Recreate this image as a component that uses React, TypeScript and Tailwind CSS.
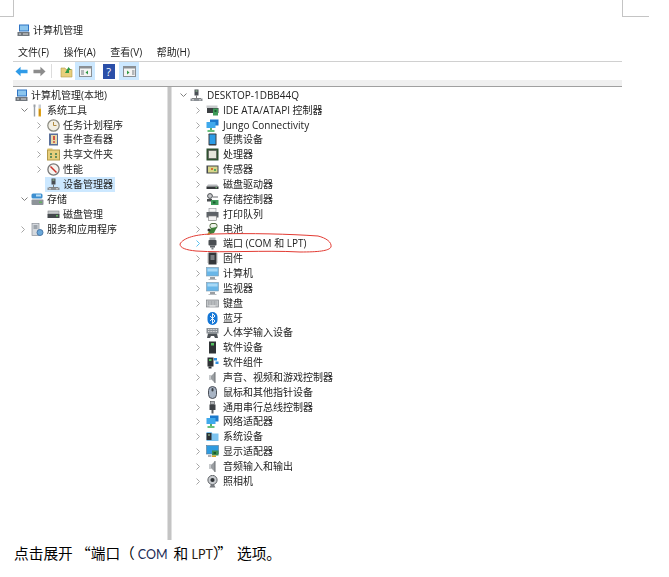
import type { ReactNode } from "react";

const Svg = ({ children }: { children: ReactNode }) => (
  <svg viewBox="0 0 13 13" className="w-[13px] h-[13px] shrink-0">
    {children}
  </svg>
);

const Host = () => (
  <Svg>
    <rect x="4.5" y="0.5" width="4" height="6" fill="#4a4f55" />
    <rect x="5.5" y="1.5" width="2" height="1" fill="#9fd4a0" />
    <path d="M6.5 6.5v3M2 9.5h9" stroke="#777" fill="none" />
    <rect x="0.5" y="9.5" width="12" height="2.5" fill="#8a8f94" />
    <rect x="2" y="10.3" width="2" height="1" fill="#ddd" />
    <rect x="9" y="10.3" width="2" height="1" fill="#ddd" />
  </Svg>
);

const Manage = () => (
  <Svg>
    <rect x="2" y="0.5" width="10" height="7" fill="#2f74c4" />
    <rect x="3" y="1.5" width="8" height="5" fill="#8cc6ee" />
    <rect x="0.5" y="8" width="12" height="4" fill="#70767c" />
    <path d="M2 10h2M6 10h5" stroke="#ddd" />
  </Svg>
);

const Tools = () => (
  <Svg>
    <path d="M2.5 0.5h2v2l-0.3 1v9h-1.4v-9l-0.3-1z" fill="#9aa0a6" />
    <path d="M7.5 0.5h2.5v4h-2.5z" fill="#c8ccd0" />
    <path d="M7.5 4.5h2.5v8h-2.5z" fill="#e6a81e" />
    <path d="M8.7 5.5v6" stroke="#a8720c" strokeWidth="0.6" />
  </Svg>
);

const Clock = () => (
  <Svg>
    <circle cx="6.5" cy="6.5" r="5.7" fill="#f2efe4" stroke="#8a8a80" strokeWidth="1.2" />
    <path d="M6.5 3v3.5h3" stroke="#b08a40" fill="none" />
  </Svg>
);

const EventLog = () => (
  <Svg>
    <rect x="2" y="0.5" width="9" height="12" fill="#5a6f9a" />
    <rect x="4" y="2" width="6" height="9" fill="#e8d9a8" />
    <path d="M7 3v4" stroke="#c8322a" strokeWidth="1.6" />
    <rect x="6.2" y="8.2" width="1.6" height="1.6" fill="#c8322a" />
  </Svg>
);

const Shared = () => (
  <Svg>
    <rect x="0.5" y="2" width="12" height="10" fill="#e8cf7c" stroke="#b39a4a" />
    <path d="M0.5 2h5v-1.5h-5z" fill="#d8bc62" />
    <path d="M3 6h2M3 9h2M8 6h2M8 9h2" stroke="#3d7a4c" strokeWidth="1.4" />
  </Svg>
);

const Perf = () => (
  <Svg>
    <circle cx="6.5" cy="6.5" r="5.6" fill="#f6f3ef" stroke="#777" strokeWidth="1.3" />
    <path d="M3.5 3.5l6 6" stroke="#c8322a" strokeWidth="1.5" />
  </Svg>
);

const Storage = () => (
  <Svg>
    <rect x="0.5" y="0.5" width="11" height="5" rx="1.5" fill="#3d8fd0" />
    <rect x="5" y="1.5" width="5" height="2" fill="#b9def5" />
    <rect x="0.5" y="6.5" width="12" height="5.5" rx="1" fill="#8d9399" />
    <rect x="8" y="8.5" width="3" height="1.5" fill="#62b45f" />
  </Svg>
);

const Disk = () => (
  <Svg>
    <rect x="1" y="3" width="11" height="3" fill="#c8cacc" stroke="#808488" strokeWidth="0.6" />
    <rect x="0.5" y="6" width="12" height="4" fill="#45494d" />
    <rect x="9" y="7" width="2" height="1.5" fill="#62b45f" />
  </Svg>
);

const Services = () => (
  <Svg>
    <rect x="1" y="0.5" width="7" height="12" fill="#d5d9de" stroke="#8a9099" strokeWidth="0.7" />
    <path d="M2.5 3h4M2.5 5h4" stroke="#67707a" />
    <circle cx="9" cy="9.5" r="3" fill="#6aa8da" stroke="#4a78a8" />
  </Svg>
);

const Ide = () => (
  <Svg>
    <rect x="0.5" y="1.5" width="11" height="2.5" fill="#c8cacc" />
    <rect x="1" y="4" width="11.5" height="5" fill="#3c4043" />
    <rect x="7" y="4.5" width="5" height="7" fill="#3d9a58" />
    <rect x="8.5" y="6" width="2" height="2" fill="#1c5a30" />
  </Svg>
);

const Network = () => (
  <Svg>
    <rect x="4" y="0.5" width="8.5" height="6" fill="#1c79cc" />
    <rect x="0.5" y="3" width="9" height="6" fill="#3fa9ec" />
    <path d="M5 9v2" stroke="#2f9a45" strokeWidth="1.6" />
    <path d="M1.5 12h7" stroke="#42b05a" strokeWidth="1.6" />
  </Svg>
);

const Portable = () => (
  <Svg>
    <rect x="2.5" y="0.5" width="8" height="12" rx="0.8" fill="#3a3f44" />
    <rect x="3.5" y="1.5" width="6" height="9.5" fill="#2d9ce6" />
  </Svg>
);

const Cpu = () => (
  <Svg>
    <rect x="0.5" y="0.5" width="12" height="12" fill="#2f5030" />
    <rect x="2.5" y="2.5" width="8" height="8" fill="#e6e6dc" stroke="#555" strokeWidth="0.6" />
  </Svg>
);

const Sensor = () => (
  <Svg>
    <rect x="0.5" y="2.5" width="12" height="8" fill="#45494d" />
    <rect x="2" y="3.5" width="9.5" height="6" fill="#d8d68a" />
    <rect x="5" y="5" width="2" height="2" fill="#d6702f" />
    <rect x="8" y="6" width="2" height="2" fill="#5ca85c" />
  </Svg>
);

const Drive = () => (
  <Svg>
    <path d="M2 6.5h9l1.5 2h-12z" fill="#b5b8bb" />
    <rect x="0.5" y="8.5" width="12" height="2.5" fill="#35383b" />
    <rect x="9.5" y="9.2" width="1.5" height="1" fill="#7cc77c" />
  </Svg>
);

const StorageCtl = () => (
  <Svg>
    <circle cx="4" cy="3" r="2.4" fill="#c8cacc" stroke="#4a4d50" />
    <rect x="1" y="6" width="5" height="2.5" fill="#4a4d50" />
    <rect x="5" y="7" width="7.5" height="5" fill="#3d9a58" />
    <rect x="7" y="8.5" width="2.5" height="2" fill="#1c5a30" />
    <path d="M7 4h5" stroke="#6a6d70" />
  </Svg>
);

const Printer = () => (
  <Svg>
    <rect x="3" y="0.5" width="7" height="3.5" fill="#f5f5f5" stroke="#8a8f94" strokeWidth="0.6" />
    <rect x="0.5" y="4" width="12" height="5.5" fill="#5d6267" />
    <rect x="2.5" y="8" width="8" height="4.5" fill="#f2f2f2" stroke="#777" strokeWidth="0.6" />
  </Svg>
);

const Battery = () => (
  <Svg>
    <rect x="4" y="0.5" width="7" height="5" rx="2" fill="#eef2ea" stroke="#4f6a3c" />
    <path d="M1 12l4-7 6-1-3 6z" fill="#3e7f38" />
    <path d="M1 12l3-1-1-2z" fill="#d8a420" />
    <circle cx="3" cy="7" r="1.5" fill="#333" />
  </Svg>
);

const Port = () => (
  <Svg>
    <rect x="3.5" y="0.5" width="6" height="2.5" fill="#a8acb0" />
    <rect x="2.5" y="3" width="8" height="5.5" rx="0.8" fill="#4a4e52" />
    <rect x="4" y="8.5" width="5" height="2" fill="#5f6367" />
    <rect x="5.5" y="10.5" width="2" height="2" fill="#7a7e82" />
  </Svg>
);

const Firmware = () => (
  <Svg>
    <rect x="2.5" y="0.5" width="8" height="12" fill="#34373a" />
    <path d="M2.5 2h-1M2.5 4h-1M2.5 6h-1M2.5 8h-1M2.5 10h-1M10.5 2h1M10.5 4h1M10.5 6h1M10.5 8h1M10.5 10h1" stroke="#777" />
    <rect x="4.5" y="3" width="4" height="5" fill="#7a7e82" />
  </Svg>
);

const Monitor = () => (
  <Svg>
    <rect x="0.5" y="0.5" width="12" height="8.5" fill="#68b6e8" stroke="#7f99ac" strokeWidth="0.6" />
    <rect x="1.5" y="1.5" width="10" height="3" fill="#a8d9f6" />
    <path d="M4 11h5" stroke="#9a9ea2" strokeWidth="2" />
    <path d="M2.5 12.5h8" stroke="#b8bcc0" />
  </Svg>
);

const Keyboard = () => (
  <Svg>
    <rect x="0.5" y="3" width="12" height="7" fill="#c4c7ca" stroke="#7e8286" strokeWidth="0.7" />
    <path d="M2 5h9M2 7h9" stroke="#8c9094" strokeDasharray="1 0.5" />
    <path d="M3.5 9h6" stroke="#f0f0f0" />
  </Svg>
);

const Bluetooth = () => (
  <Svg>
    <rect x="1.5" y="0" width="10" height="13" rx="5" fill="#1476d6" />
    <path d="M4 4l5 5-2.5 2.5v-10L9 4l-5 5" stroke="#fff" strokeWidth="0.9" fill="none" />
  </Svg>
);

const Hid = () => (
  <Svg>
    <rect x="0.5" y="2" width="12" height="5.5" fill="#8a9096" />
    <path d="M2 3.5h9M2 5.5h9" stroke="#ddd" strokeDasharray="1 0.6" />
    <path d="M1 12l1-4.5h9l1 4.5h-3l-1-2H5l-1 2z" fill="#4d5257" />
  </Svg>
);

const SoftDevice = () => (
  <Svg>
    <rect x="3" y="0.5" width="7" height="12" fill="#2f3235" />
    <rect x="5" y="2" width="3" height="2.5" fill="#54c060" />
  </Svg>
);

const SoftPart = () => (
  <Svg>
    <rect x="1.5" y="1.5" width="6" height="9" fill="#2f3235" />
    <rect x="3" y="3" width="2.5" height="2" fill="#54c060" />
    <path d="M2.5 10.5h3v2h-3z" fill="#2f3235" />
    <path d="M8 2h3v2.5H8zM9.5 5.5h3V8h-3z" fill="#2d8fe0" />
  </Svg>
);

const Speaker = () => (
  <Svg>
    <path d="M3 4.5h2.5L9 1v11L5.5 8.5H3z" fill="#9a9ea2" />
    <path d="M9 1v11" stroke="#6d7175" />
    <path d="M3 4.5h2v4H3z" fill="#c6c9cc" />
  </Svg>
);

const Mouse = () => (
  <Svg>
    <rect x="2.5" y="0.5" width="8" height="12" rx="4" fill="#a8b4c4" stroke="#4a4f58" />
    <rect x="5.5" y="2" width="2" height="3.5" rx="1" fill="#3d4248" />
  </Svg>
);

const Usb = () => (
  <Svg>
    <rect x="4.5" y="0.5" width="4" height="3" fill="#b0b3b6" stroke="#4a4e52" strokeWidth="0.6" />
    <rect x="3.5" y="3.5" width="6" height="5.5" fill="#3e4246" />
    <path d="M6.5 9v3.5" stroke="#5a5e62" strokeWidth="2" />
  </Svg>
);

const SysDevice = () => (
  <Svg>
    <path d="M0.5 2h5l1 1.5h6V11H0.5z" fill="#7cc3ef" />
    <rect x="0.5" y="3" width="5" height="7" fill="#2c3034" />
    <rect x="2" y="4.5" width="2" height="1" fill="#9fd4a0" />
  </Svg>
);

const Display = () => (
  <Svg>
    <rect x="0.5" y="0.5" width="12" height="8.5" fill="#2f9be0" stroke="#5a7a94" strokeWidth="0.6" />
    <rect x="6" y="5.5" width="6.5" height="5" fill="#3d8f50" />
    <rect x="7.5" y="7" width="2.5" height="2" fill="#1c5a30" />
    <rect x="6" y="10.5" width="4" height="1.5" fill="#d8a420" />
    <path d="M2 11h3.5" stroke="#9a9ea2" strokeWidth="1.6" />
  </Svg>
);

const Camera = () => (
  <Svg>
    <circle cx="6.5" cy="5" r="4.6" fill="#c9ccd0" stroke="#5e6266" />
    <circle cx="6.5" cy="5" r="2.1" fill="#2f3337" />
    <path d="M3.5 12.5h6L8 9.5H5z" fill="#777b80" />
  </Svg>
);

type RowProps = {
  icon: ReactNode;
  label: string;
  open?: boolean;
  shut?: boolean;
  pad?: string;
  active?: boolean;
  hot?: boolean;
  wide?: boolean;
};

function Row({ icon, label, open, shut, pad = "pl-0", active, hot, wide }: RowProps) {
  return (
    <div className={`flex items-center h-[14.85px] ${pad}`}>
      <span className="w-[16px] shrink-0 flex justify-start pl-[6px]">
        {open && (
          <svg viewBox="0 0 7 5" className="w-[7px] h-[5px]">
            <path d="M0.5 0.5l3 3 3-3" stroke="#808080" fill="none" />
          </svg>
        )}
        {shut && (
          <svg viewBox="0 0 4 7" className="w-[4px] h-[7px]">
            <path d="M0.5 0.5l3 3-3 3" stroke={hot ? "#5cc1ee" : "#a6a6a6"} fill="none" />
          </svg>
        )}
      </span>
      <span className={`flex items-center h-[14.85px] ${active ? "bg-[#cce8ff] -ml-[2px] pl-[2px] pr-[2px]" : ""}`}>
        {icon}
        <span className={`whitespace-nowrap ${wide ? "ml-[4px]" : "ml-[3px]"}`}>{label}</span>
      </span>
    </div>
  );
}

const devices: [ReactNode, string][] = [
  [<Ide />, "IDE ATA/ATAPI 控制器"],
  [<Network />, "Jungo Connectivity"],
  [<Portable />, "便携设备"],
  [<Cpu />, "处理器"],
  [<Sensor />, "传感器"],
  [<Drive />, "磁盘驱动器"],
  [<StorageCtl />, "存储控制器"],
  [<Printer />, "打印队列"],
  [<Battery />, "电池"],
  [<Port />, "端口 (COM 和 LPT)"],
  [<Firmware />, "固件"],
  [<Monitor />, "计算机"],
  [<Monitor />, "监视器"],
  [<Keyboard />, "键盘"],
  [<Bluetooth />, "蓝牙"],
  [<Hid />, "人体学输入设备"],
  [<SoftDevice />, "软件设备"],
  [<SoftPart />, "软件组件"],
  [<Speaker />, "声音、视频和游戏控制器"],
  [<Mouse />, "鼠标和其他指针设备"],
  [<Usb />, "通用串行总线控制器"],
  [<Network />, "网络适配器"],
  [<SysDevice />, "系统设备"],
  [<Display />, "显示适配器"],
  [<Speaker />, "音频输入和输出"],
  [<Camera />, "照相机"],
];

const menus = ["文件(F)", "操作(A)", "查看(V)", "帮助(H)"];

export default function App() {
  return (
    <div className="relative w-[669px] h-[577px] bg-white text-[#222] overflow-hidden font-['Open_Sans','Noto_Sans_CJK_SC',sans-serif] text-[10px]">
      {/* crop marks */}
      <div className="flex h-[17px]">
        <div className="w-[14px] border-r border-b border-[#c4c4c4]" />
        <div className="w-[608px]" />
        <div className="w-[27px] border-l border-b border-[#c4c4c4]" />
      </div>

      <div className="ml-[13px] w-[609px] h-[523px] flex flex-col blur-[0.35px]">
        <div className="flex items-center h-[27px] pl-[4px]">
          <Manage />
          <span className="ml-[3px]">计算机管理</span>
        </div>
        <div className="flex items-center h-[17px] pl-[5px] gap-[14.5px]">
          {menus.map((m) => (
            <span key={m}>{m}</span>
          ))}
        </div>
        <div className="border-t border-[#d0d0d0] h-[19px] flex items-center pl-[2px]">
          <svg viewBox="0 0 14 11" className="w-[13px] h-[11px]">
            <path d="M0.5 5.5L6 0.5v3h7.5v4H6v3z" fill="#2f9be8" />
          </svg>
          <svg viewBox="0 0 14 11" className="w-[13px] h-[11px] ml-[5px]">
            <path d="M13.5 5.5L8 0.5v3H0.5v4H8v3z" fill="#8c8c8c" />
          </svg>
          <span className="w-px h-[14px] bg-[#dcdcdc] ml-[5px]" />
          <span className="w-[18px] h-[18px] flex items-center justify-center ml-[5px]">
            <svg viewBox="0 0 13 13" className="w-[13px] h-[13px]">
              <path d="M1 3h4l1 1.5h6V12H1z" fill="#e8cf7c" stroke="#b39a4a" strokeWidth="0.6" />
              <path d="M5 8l3.5-6L11 5H9v3z" fill="#2f9a45" />
            </svg>
          </span>
          <span className="w-[20px] h-[18px] bg-[#cce8ff] flex items-center justify-center">
            <svg viewBox="0 0 13 11" className="w-[13px] h-[11px]">
              <rect x="0.5" y="0.5" width="12" height="10" fill="#f4f4f4" stroke="#8a8f94" />
              <rect x="0.5" y="0.5" width="12" height="2" fill="#8a8f94" />
              <rect x="2" y="4" width="3" height="5" fill="#b5b8bb" />
              <path d="M9 4.5L6.5 6.5 9 8.5z" fill="#2f9a45" />
            </svg>
          </span>
          <span className="w-[24px] h-[18px] flex items-center justify-center pl-[3px]">
            <span className="w-[12px] h-[15px] bg-[#2b4fa8] text-white text-[11px] leading-[15px] text-center">?</span>
          </span>
          <span className="w-[20px] h-[18px] bg-[#cce8ff] flex items-center justify-center">
            <svg viewBox="0 0 13 11" className="w-[13px] h-[11px]">
              <rect x="0.5" y="0.5" width="12" height="10" fill="#f4f4f4" stroke="#8a8f94" />
              <rect x="0.5" y="0.5" width="12" height="2" fill="#8a8f94" />
              <rect x="9" y="4" width="2.5" height="5" fill="#b5b8bb" />
              <path d="M4 4.5L6.5 6.5 4 8.5z" fill="#2f9a45" />
            </svg>
          </span>
        </div>
        <div className="h-[7px] bg-[#f0f0f0] border-b border-[#a0a0a0]" />

        <div className="flex flex-1 min-h-0">
          <div className="w-[154px] pt-[1px]">
            <div className="flex items-center h-[14.85px] pl-[2px]">
              <Manage />
              <span className="ml-[3px]">计算机管理(本地)</span>
            </div>
            <Row icon={<Tools />} label="系统工具" open pad="pl-[2px]" />
            <Row icon={<Clock />} label="任务计划程序" shut pad="pl-[18px]" />
            <Row icon={<EventLog />} label="事件查看器" shut pad="pl-[18px]" />
            <Row icon={<Shared />} label="共享文件夹" shut pad="pl-[18px]" />
            <Row icon={<Perf />} label="性能" shut pad="pl-[18px]" />
            <Row icon={<Host />} label="设备管理器" pad="pl-[18px]" active />
            <Row icon={<Storage />} label="存储" open pad="pl-[2px]" />
            <Row icon={<Disk />} label="磁盘管理" pad="pl-[18px]" />
            <Row icon={<Services />} label="服务和应用程序" shut pad="pl-[2px]" />
          </div>

          <div className="w-[5px] bg-[#c4c4c4] border-x border-[#e0e0e0]" />

          <div className="flex-1 pt-[1px]">
            <Row icon={<Host />} label="DESKTOP-1DBB44Q" open pad="pl-[2px]" wide />
            {devices.map(([icon, label]) => (
              <Row key={label} icon={icon} label={label} shut hot={label.startsWith("端口")} pad="pl-[18px]" wide />
            ))}
          </div>
        </div>
      </div>

      {/* hand drawn annotation */}
      <svg viewBox="0 0 669 577" className="absolute inset-0 w-[669px] h-[577px] pointer-events-none">
        <path
          d="M180 244C183 238 196 234 214 234C250 233 290 234 318 236C326 238 332 242 331 247C329 251 318 252 300 252C262 250 226 253 196 251C186 250 180 248 180 244Z"
          fill="none"
          stroke="#e23a32"
          strokeWidth="1"
        />
      </svg>

      <p className="ml-[14px] mt-[2px] text-[14.7px] leading-[22px] text-black font-['Noto_Sans_CJK_SC',sans-serif] whitespace-nowrap">
        点击展开 “端口（<span className="ml-[3px] font-['Lato',sans-serif] text-[12.5px] text-[#1a2a55]">COM</span><span className="ml-[6px]">和</span> <span className="font-['Lato',sans-serif] text-[12.5px] text-[#2a1a10]">LPT</span><span className="tracking-[-5px]">）</span><span className="ml-[2px]">”</span><span className="ml-[5px]">选项。</span>
      </p>
    </div>
  );
}
